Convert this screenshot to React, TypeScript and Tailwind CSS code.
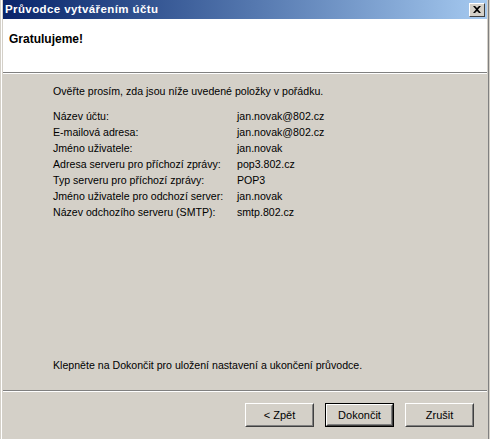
import React from 'react';

const rows: [string, string][] = [
  ['Název účtu:', 'jan.novak@802.cz'],
  ['E-mailová adresa:', 'jan.novak@802.cz'],
  ['Jméno uživatele:', 'jan.novak'],
  ['Adresa serveru pro příchozí zprávy:', 'pop3.802.cz'],
  ['Typ serveru pro příchozí zprávy:', 'POP3'],
  ['Jméno uživatele pro odchozí server:', 'jan.novak'],
  ['Název odchozího serveru (SMTP):', 'smtp.802.cz'],
];

const WinButton: React.FC<{ label: string; isDefault?: boolean }> = ({ label, isDefault }) => (
  <div className={`w-[69px] h-[24px] ${isDefault ? 'border border-black' : ''}`}>
    <div className="w-full h-full border border-t-white border-l-white border-r-[#404040] border-b-[#404040] bg-[#D4D0C8]">
      <div className="w-full h-full border border-t-[#D4D0C8] border-l-[#D4D0C8] border-r-[#808080] border-b-[#808080] flex items-center justify-center text-[11px] text-black">
        {label}
      </div>
    </div>
  </div>
);

export default function App() {
  return (
    <div
      className="w-[490px] h-[439px] overflow-hidden bg-[#D4D0C8] flex flex-col pl-[1px] pr-[1px] text-black"
      style={{ fontFamily: '"Liberation Sans", Arial, sans-serif' }}
    >
      <div className="flex flex-col flex-1 border-l border-r border-l-white border-r-[#808080] pl-[1px] pr-[1px]">
        {/* title bar */}
        <div className="h-[19px] flex items-center justify-between pl-[2px] pr-[2px] bg-gradient-to-r from-[#0A246A] to-[#A6CAF0]">
          <span className="text-white font-bold text-[11.5px] leading-none tracking-[0.4px]">Průvodce vytvářením účtu</span>
          <div className="w-[16px] h-[14px] border border-t-white border-l-white border-r-[#404040] border-b-[#404040] bg-[#D4D0C8] flex items-center justify-center">
            <svg width="8" height="7" viewBox="0 0 8 7">
              <path d="M0 0h2l2 2 2-2h2L5 3.5 8 7H6L4 5 2 7H0l3-3.5z" fill="#000" />
            </svg>
          </div>
        </div>
        {/* header */}
        <div className="h-[53px] bg-white px-[6px] pt-[11px]">
          <div className="font-bold text-[12px]">Gratulujeme!</div>
        </div>
        <div className="h-[1px] bg-[#808080]" />
        <div className="h-[1px] bg-white" />
        {/* body */}
        <div className="flex-1 flex flex-col px-[50px] pt-[9px] text-[10.6px] leading-[16px]">
          <div>Ověřte prosím, zda jsou níže uvedené položky v pořádku.</div>
          <div className="mt-[9px] flex flex-col">
            {rows.map(([k, v], i) => (
              <div key={i} className="flex">
                <span className="w-[184px]">{k}</span>
                <span>{v}</span>
              </div>
            ))}
          </div>
          <div className="mt-auto mb-[17px]">Klepněte na Dokončit pro uložení nastavení a ukončení průvodce.</div>
        </div>
        <div className="h-[1px] bg-[#808080]" />
        <div className="h-[1px] bg-white" />
        <div className="h-[47px] flex items-start justify-end gap-[11px] pt-[11px] pr-[13px]">
          <WinButton label="< Zpět" />
          <WinButton label="Dokončit" isDefault />
          <WinButton label="Zrušit" />
        </div>
      </div>
    </div>
  );
}
